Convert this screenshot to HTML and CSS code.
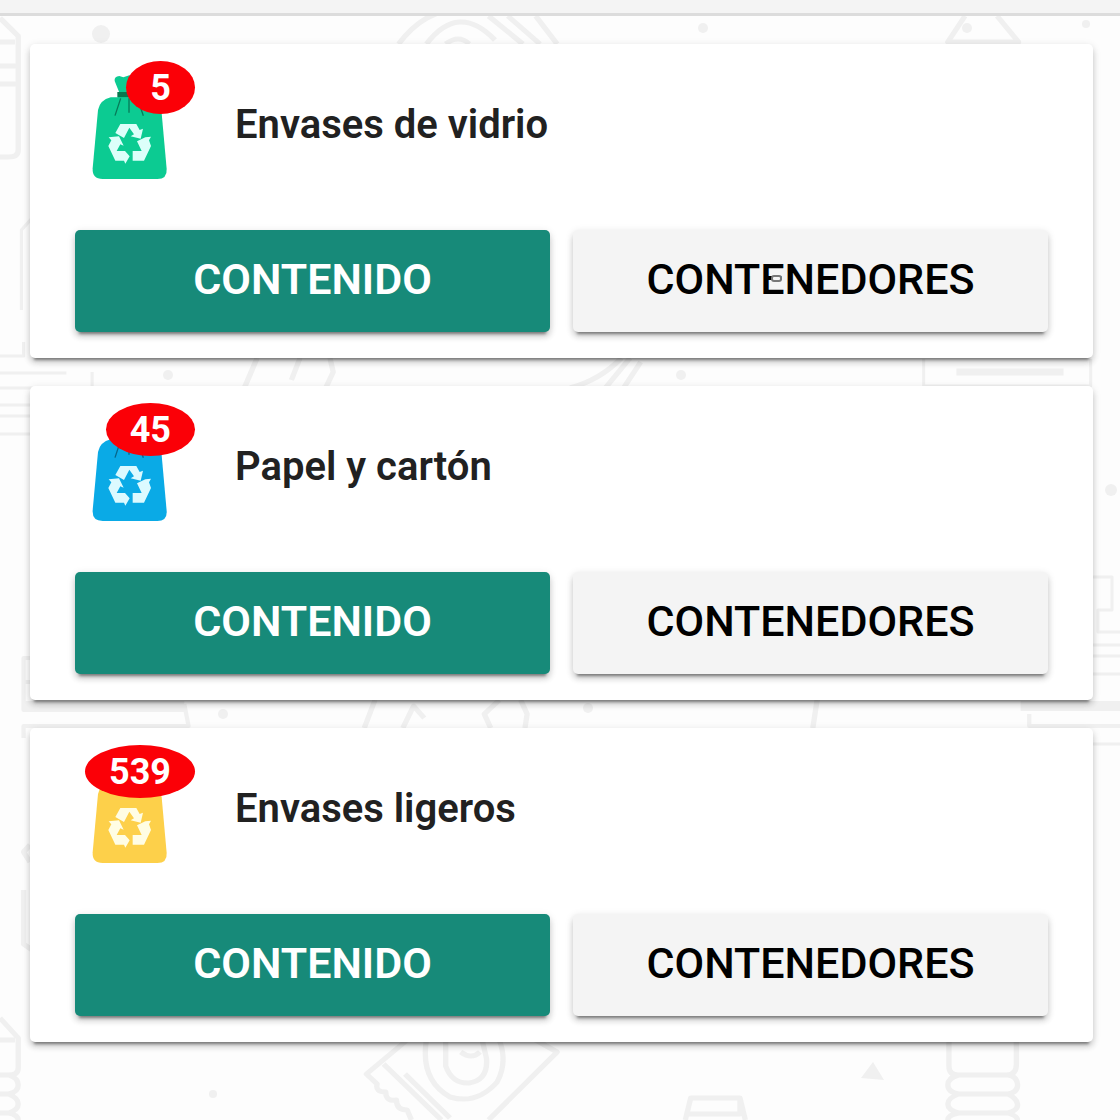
FILE: index.html
```html
<!DOCTYPE html>
<html lang="es">
<head>
<meta charset="utf-8">
<meta name="viewport" content="width=device-width, initial-scale=1">
<title>Reciclaje</title>
<link rel="stylesheet" href="styles.css">
</head>
<body>
<svg class="doodles" viewBox="0 0 1120 1120" preserveAspectRatio="xMidYMin slice" aria-hidden="true">
  <g fill="none" stroke="#f0f0f0" stroke-width="5" stroke-linejoin="round">
    <g transform="scale(1.0714 1)">
      <path d="M0 18L17 36V150Q17 157 8 157H0M0 42H14M0 66H16M0 84H16"/>
      <path d="M372 44Q400 4 440 10M398 44Q428 2 462 40M416 44Q428 34 438 44M456 16L488 44M474 16L504 44M500 16L520 44"/>
      <path d="M0 356H22V342M0 373H62M0 388H86V372M20 310V230L30 218M0 434H30M0 405H30M0 416H30" stroke-width="3"/>
      <path d="M228 388L240 358M272 380L280 358M304 388L311 372L308 358M532 388Q560 380 580 358M565 388L588 358M582 388L598 362"/>
      <path d="M34 658H22V710H172M22 738V726H176L172 704M22 682H34" stroke-width="4"/>
      <path d="M22 706H172" stroke-width="10"/>
      <path d="M340 728L350 700M376 728L386 706L396 718M466 700L452 714L458 728M486 700L492 714L490 728"/>
      <path d="M28 845L22 852L28 862M22 890V944L30 950"/>
      <path d="M0 1018L17 1038V1068Q17 1075 8 1075Q17 1078 17 1085T8 1094Q17 1098 17 1104T8 1113Q17 1115 17 1120M0 1040H14M0 1075H10M0 1094H10M0 1113H10"/>
      <path d="M380 1040L342 1074L352 1084Q350 1092 360 1092Q360 1102 370 1100Q370 1110 380 1110L384 1120M358 1064L412 1120M378 1074L420 1118M456 1120L520 1052L500 1040"/>
      <path d="M398 1040Q392 1080 420 1097Q445 1105 464 1082Q474 1062 466 1040M416 1040V1066Q422 1084 438 1083Q456 1080 454 1058L450 1040M430 1052Q440 1060 448 1052"/>
    </g>
    <g transform="translate(-40 0) scale(1.0714 1)">
      <path d="M938 16L922 42H988L968 16"/>
      <path d="M924 359V386H1091V359" stroke-width="3" transform="translate(37 0) scale(.9334 1)"/>
      <path d="M930 372H1030" stroke-width="7"/>
      <path d="M800 700L796 728"/>
      <path d="M990 706H1090" stroke-width="10"/>
      <path d="M998 714V726H1090" stroke-width="4"/>
      <path d="M677 1120L682 1098H728L733 1120M680 1114H728V1098"/>
      <path d="M923 1040V1066Q923 1075 932 1075H977Q986 1075 986 1064V1040M932 1075Q922 1078 922 1085T932 1094H978Q988 1092 987 1084T978 1075M932 1094Q922 1098 922 1104T932 1113H978Q988 1110 987 1104T978 1094M932 1113Q922 1115 922 1120M978 1113Q987 1116 987 1120"/>
    </g>
    <path d="M1093 577H1112V610H1098V632H1120M1093 645H1120M1093 656H1120M1093 674H1120M1093 744H1120" stroke-width="3"/>
  </g>
  <g fill="#f0f0f0">
    <circle cx="101" cy="34" r="9"/><circle cx="703" cy="28" r="5"/><circle cx="967" cy="28" r="5"/><circle cx="1086" cy="24" r="4"/>
    <circle cx="168" cy="375" r="5"/><circle cx="681" cy="375" r="5"/><circle cx="223" cy="714" r="5"/><circle cx="588" cy="708" r="5"/>
    <circle cx="1111" cy="490" r="6"/><path d="M873 1062L884 1080L861 1078Z"/><circle cx="213" cy="1094" r="4"/>
  </g>
</svg>

<svg class="sprite" aria-hidden="true">
  <symbol id="neck" viewBox="15 48 360 372">
    <path fill="currentColor" d="M150 148L134 108Q132 94 148 93L160 97L178 91L196 97Q224 88 224 104L206 148L218 162H140Z"/>
    <path fill="#08784f" d="M142 141H214V157H142Z"/>
  </symbol>
  <symbol id="bag" viewBox="15 48 360 372">
    <path fill="currentColor" d="M122 157H236Q270 166 275 205L290 372Q292 402 262 402H98Q66 402 68 370L84 195Q90 165 122 157Z"/>
    <path class="crease" d="M152 160L135 212M177 160V203M202 160L220 212"/>
    <g class="arrows">
      <path d="M151 237H199L209 255L219 251L212 281L182 274L192 268L178 248L162 279L136 264Z"/>
      <path d="M116 277L147 274L161 302L151 298L140 318H165L179 334L166 356L162 347H136L115 303L124 286Z"/>
      <path d="M201 289L226 277L243 275L237 286L243 303L222 347H188V318H215Z"/>
    </g>
  </symbol>
</svg>

<header class="topbar"></header>

<main class="list">
  <section class="card">
    <div class="card-head">
      <div class="media glass">
        <svg class="bag"><use href="#neck"/><use href="#bag"/></svg>
        <span class="badge">5</span>
      </div>
      <h2 class="title">Envases de vidrio</h2>
    </div>
    <div class="actions">
      <button class="btn primary" type="button">CONTENIDO</button>
      <button class="btn plain" type="button">CONTENEDORES<span class="pointer"></span></button>
    </div>
  </section>

  <section class="card">
    <div class="card-head">
      <div class="media paper">
        <svg class="bag"><use href="#bag"/></svg>
        <span class="badge">45</span>
      </div>
      <h2 class="title">Papel y cartón</h2>
    </div>
    <div class="actions">
      <button class="btn primary" type="button">CONTENIDO</button>
      <button class="btn plain" type="button">CONTENEDORES</button>
    </div>
  </section>

  <section class="card">
    <div class="card-head">
      <div class="media light">
        <svg class="bag"><use href="#bag"/></svg>
        <span class="badge">539</span>
      </div>
      <h2 class="title">Envases ligeros</h2>
    </div>
    <div class="actions">
      <button class="btn primary" type="button">CONTENIDO</button>
      <button class="btn plain" type="button">CONTENEDORES</button>
    </div>
  </section>
</main>
</body>
</html>
```

FILE: styles.css
```css
* {
  box-sizing: border-box;
}

body {
  position: relative;
  min-height: 100vh;
  margin: 0;
  overflow-x: hidden;
  background: #fdfdfd;
  color: #212121;
  font-family: Roboto, "Liberation Sans", sans-serif;
}

.doodles {
  position: absolute;
  inset: 0;
  z-index: -1;
  width: 100%;
  height: 100%;
}

.sprite {
  position: absolute;
  width: 0;
  height: 0;
}

.topbar {
  height: 16px;
  background: #f4f4f4;
  border-bottom: 3px solid #dcdcdc;
}

.list {
  display: flex;
  flex-direction: column;
  gap: 28px;
  padding: 28px 27px 76px 30px;
}

.card {
  padding: 17px 45px 26px;
  background: #fff;
  border-radius: 5px;
  box-shadow: 0 5px 6px rgba(0, 0, 0, .14), 0 6px 3px -4px rgba(0, 0, 0, .4), 0 2px 8px rgba(0, 0, 0, .12);
}

.card-head {
  display: flex;
  align-items: center;
  gap: 40px;
  margin-bottom: 45px;
}

.media {
  --arrows: #dcfffa;
  --crease: rgba(0, 0, 0, .4);
  position: relative;
  flex: none;
  width: 120px;
  height: 124px;
}

.glass {
  color: #0ccb92;
}

.paper {
  --arrows: #dcfaff;
  color: #0aaae6;
}

.light {
  --arrows: #fffde4;
  --crease: transparent;
  color: #fdd04a;
}

.bag {
  display: block;
  width: 100%;
  height: 100%;
}

.crease {
  fill: none;
  stroke: var(--crease);
  stroke-width: 4;
}

.arrows {
  fill: var(--arrows);
}

.badge {
  position: absolute;
  top: 0;
  right: 0;
  padding: 1px 24px 0;
  border-radius: 50%;
  background: #fb0007;
  color: #fff;
  font-size: 36px;
  font-weight: 700;
  line-height: 52px;
}

.title {
  margin: 0;
  padding-top: 3px;
  font-size: 40px;
  font-weight: 600;
  line-height: 48px;
}

.actions {
  display: grid;
  grid-template-columns: 1fr 1fr;
  gap: 23px;
}

.btn {
  position: relative;
  height: 102px;
  padding: 0 0 4px;
  border: 0;
  border-radius: 5px;
  font-family: inherit;
  font-size: 43px;
  font-weight: 500;
  box-shadow: 0 5px 6px rgba(0, 0, 0, .14), 0 6px 3px -4px rgba(0, 0, 0, .4), 0 2px 8px rgba(0, 0, 0, .12);
}

.primary {
  background: #178a79;
  color: #fff;
  font-weight: 600;
}

.plain {
  background: #f4f4f4;
  color: #000;
}

.pointer {
  position: absolute;
  top: 45px;
  left: 198px;
  width: 11px;
  height: 7px;
  border: 2px solid #777;
  border-radius: 3px;
  background: #f4f4f4;
}
```
